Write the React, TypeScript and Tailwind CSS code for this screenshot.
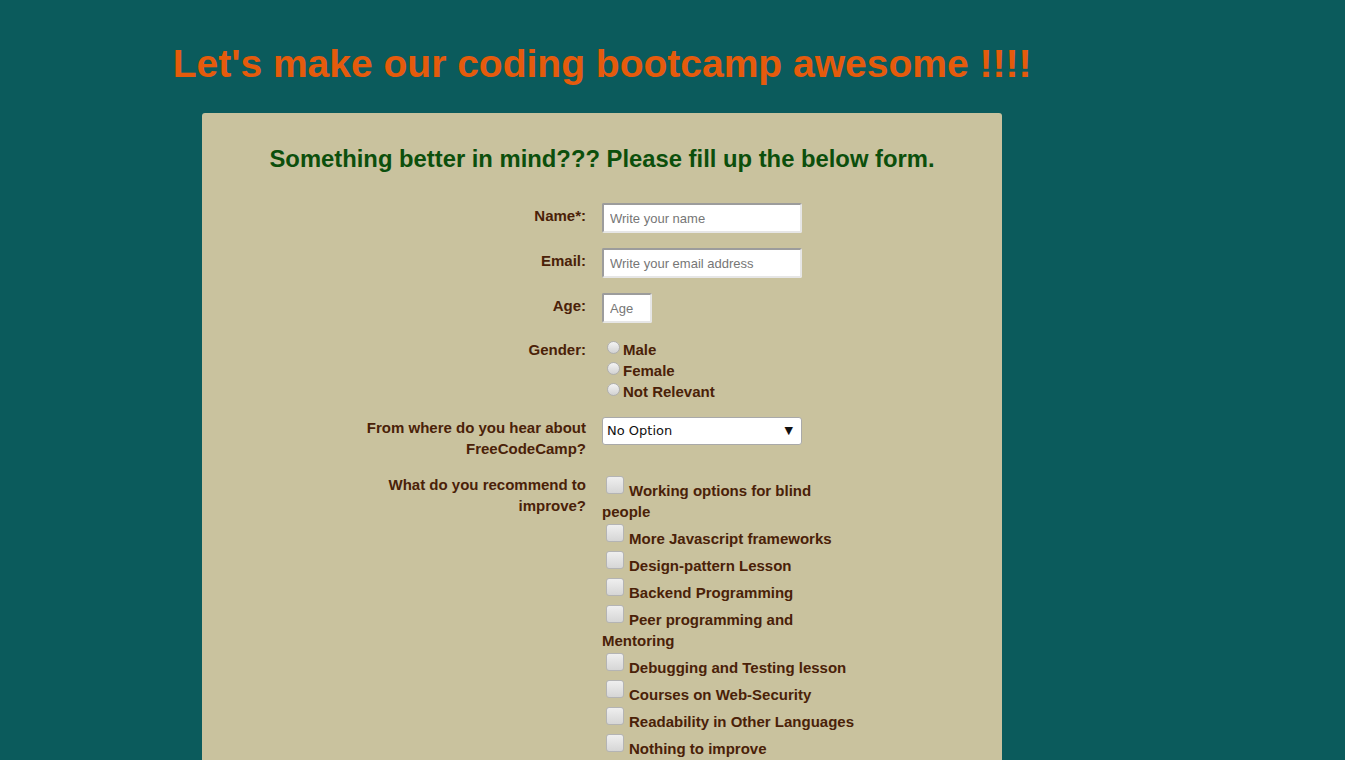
import React from 'react';

const improvements = [
  'Working options for blind people',
  'More Javascript frameworks',
  'Design-pattern Lesson',
  'Backend Programming',
  'Peer programming and Mentoring',
  'Debugging and Testing lesson',
  'Courses on Web-Security',
  'Readability in Other Languages',
  'Nothing to improve',
];

const genders = ['Male', 'Female', 'Not Relevant'];

function Label({ text, className = '' }: { text: string; className?: string }) {
  return (
    <div className="w-[400px] shrink-0 pr-[16px] flex justify-end">
      <label className={`max-w-[240px] text-right text-[15px] leading-[21px] font-bold text-[#4a2108] ${className}`}>
        {text}
      </label>
    </div>
  );
}

function TextInput({ placeholder, width }: { placeholder: string; width: string }) {
  return (
    <input
      readOnly
      placeholder={placeholder}
      className={`${width} h-[30px] rounded-[2px] border-2 border-t-[#9c9c9c] border-l-[#9c9c9c] border-b-[#e6e6e6] border-r-[#e6e6e6] bg-white px-[6px] text-[13px] text-[#333] placeholder:text-[#767676] outline-none font-['Comic_Sans_MS','Liberation_Sans',sans-serif]`}
    />
  );
}

export default function App() {
  return (
    <div className="min-h-screen bg-[#0b5b5c] font-['Comic_Sans_MS','Liberation_Sans',sans-serif]">
      <div className="w-[1000px] ml-[102px] pt-[40px]">
        <h1 className="text-center text-[39px] leading-[48px] font-bold text-[#e55b0c] whitespace-nowrap">
          Let's make our coding bootcamp awesome !!!!
        </h1>

        <div className="mx-auto mt-[25px] w-[800px] rounded-[3px] bg-[#c9c29e] pt-[31px] pb-[40px]">
          <h2 className="text-center text-[23.8px] leading-[30px] font-bold text-[#0c4f0c]">
            Something better in mind??? Please fill up the below form.
          </h2>

          <div className="mt-[29px] flex flex-col gap-[15px]">
            <div className="flex">
              <Label text="Name*:" className="pt-[2px]" />
              <TextInput placeholder="Write your name" width="w-[200px]" />
            </div>

            <div className="flex">
              <Label text="Email:" className="pt-[2px]" />
              <TextInput placeholder="Write your email address" width="w-[200px]" />
            </div>

            <div className="flex">
              <Label text="Age:" className="pt-[2px]" />
              <TextInput placeholder="Age" width="w-[50px]" />
            </div>

            <div className="flex">
              <Label text="Gender:" className="pt-[1px]" />
              <div className="pt-[1px] text-[15px] leading-[21px] font-bold text-[#4a2108]">
                {genders.map((g) => (
                  <div key={g}>
                    <span className="inline-block align-[1px] ml-[5px] mr-[3px] h-[13px] w-[13px] rounded-full border border-[#b0b0b0] bg-linear-to-b from-[#f4f4f4] to-[#d2d2d2]" />
                    {g}
                  </div>
                ))}
              </div>
            </div>

            <div className="flex">
              <Label text="From where do you hear about FreeCodeCamp?" />
              <div className="flex h-[28px] w-[200px] items-center justify-between rounded-[3px] border border-[#a9a9a9] bg-white pl-[4px] pr-[8px] text-[13px] text-[#111] font-['DejaVu_Sans',sans-serif]">
                <span>No Option</span>
                <span className="text-[11px]">▼</span>
              </div>
            </div>

            <div className="flex">
              <Label text="What do you recommend to improve?" />
              <div className="w-[258px] text-[15px] leading-[21px] font-bold text-[#4a2108]">
                {improvements.map((item) => (
                  <div key={item} className="pt-[2px]">
                    <span className="inline-block align-[2px] ml-[4px] mr-[5px] h-[18px] w-[18px] rounded-[3px] border border-[#b4b4b4] bg-linear-to-b from-[#efefef] to-[#d6d6d6]" />
                    {item}
                  </div>
                ))}
              </div>
            </div>
          </div>
        </div>
      </div>
    </div>
  );
}
